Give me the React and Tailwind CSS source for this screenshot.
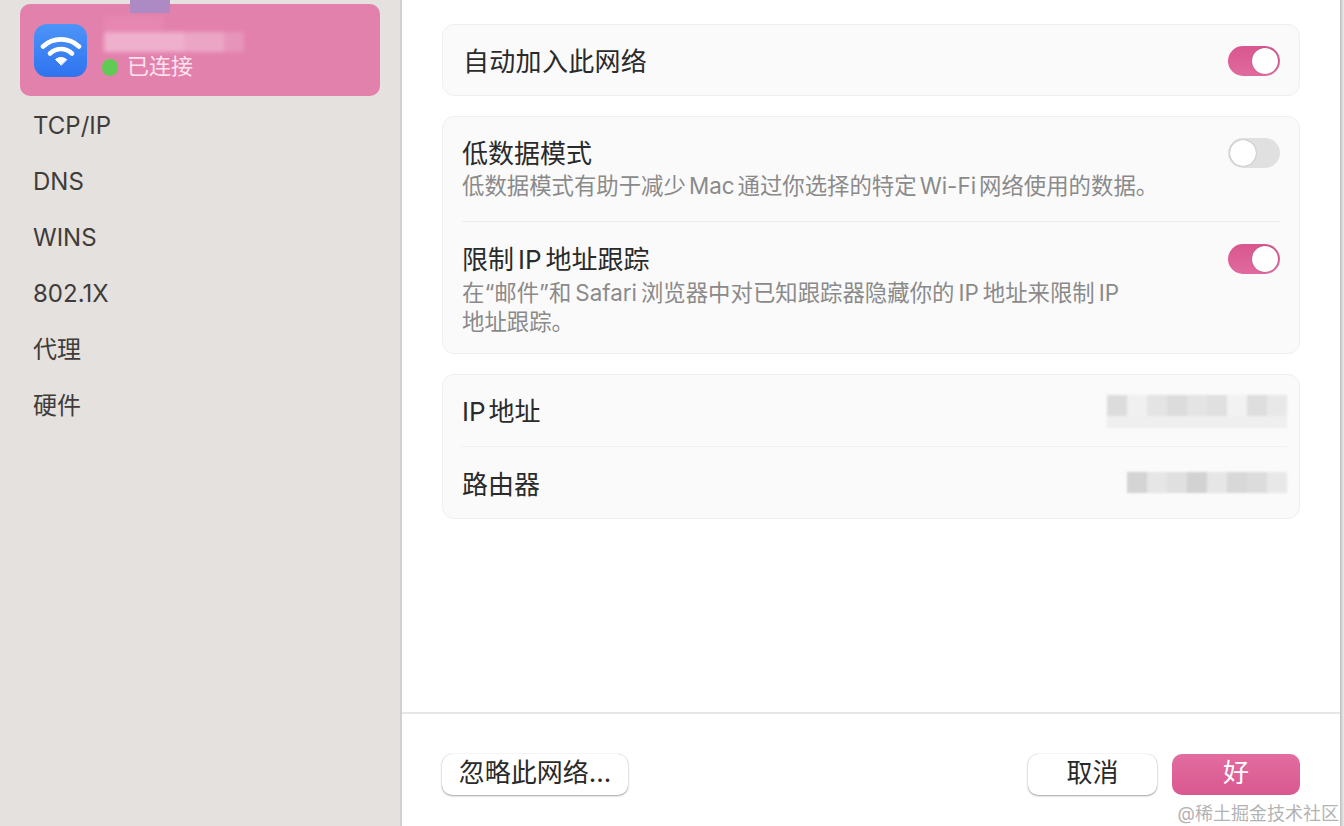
import React from "react";

const cjk = "font-['Inter','Noto_Sans_CJK_SC',sans-serif]";

function Toggle({ on }) {
  return (
    <div
      className={`flex h-[30px] w-[52px] shrink-0 items-center rounded-full p-[2px] ${
        on ? "justify-end bg-gradient-to-b from-[#d9568f] to-[#e06a9e]" : "justify-start bg-[#e0e0e0]"
      }`}
    >
      <div className="h-[26px] w-[26px] rounded-full bg-white shadow-[0_0_1px_rgba(0,0,0,0.5)]" />
    </div>
  );
}

// mosaic blocks for the blurred out values
function Redacted({ cells, under }) {
  return (
    <div className="flex flex-col blur-[0.8px]">
      <div className="flex h-[21px]">
        {cells.map((c, i) => (
          <div key={i} className="h-full w-5" style={{ backgroundColor: c }} />
        ))}
      </div>
      {under && (
        <div className="flex h-3">
          {cells.map((c, i) => (
            <div key={i} className="h-full w-5 bg-[#efefef]" />
          ))}
        </div>
      )}
    </div>
  );
}

function WifiIcon() {
  return (
    <div className="flex h-[53px] w-[53px] items-center justify-center rounded-[13px] bg-gradient-to-b from-[#4c94f8] to-[#2f73ef]">
      <svg width="42" height="34" viewBox="0 0 42 34" fill="none" stroke="white" strokeLinecap="round">
        <path d="M3 12.5C13 3 29 3 39 12.5" strokeWidth="4.6" />
        <path d="M10 19.5C16.5 13.5 25.5 13.5 32 19.5" strokeWidth="4.6" />
        <path d="M21 31l-5.5-5.5c3-2.6 8-2.6 11 0z" fill="white" stroke="white" strokeWidth="1" strokeLinejoin="round" />
      </svg>
    </div>
  );
}

const sideItems = ["TCP/IP", "DNS", "WINS", "802.1X", "代理", "硬件"];

export default function App() {
  return (
    <div className={`relative flex h-[826px] w-[1344px] overflow-hidden bg-white ${cjk}`}>
      {/* sidebar */}
      <aside className="h-full w-[402px] shrink-0 border-r-2 border-[#d2d0ce] bg-[#e5e1df] px-5 pt-1">
        <div className="flex h-[92px] items-start gap-[17px] rounded-[10px] bg-[#e381ad] pl-[14px] pt-5">
          <WifiIcon />
          <div className="-mt-2 flex flex-col">
            <div className="h-[16px] w-[60px] bg-[#e587b1] blur-[2px]" />
            <div className="flex h-5 w-[140px] blur-[2px]">
              <div className="h-full w-20 bg-[#efb0cd]" />
              <div className="h-full w-[40px] bg-[#eba6c6]" />
              <div className="h-full w-5 bg-[#e694ba]" />
            </div>
            <div className="mt-[2px] flex h-[24px] items-center gap-[9px] text-[22px] leading-none text-[#fbe3ee]">
              <span className="-ml-[2px] mt-[2px] h-[17px] w-[16px] rounded-full bg-[#5fcb54]" />
              已连接
            </div>
          </div>
        </div>
        <ul className="mt-[2px] pl-[13px] text-[24px] text-[#3f3c3a]">
          {sideItems.map((item) => (
            <li key={item} className="flex h-14 items-center">
              {item}
            </li>
          ))}
        </ul>
      </aside>

      {/* content */}
      <main className="flex h-full flex-1 flex-col pr-1">
        <div className="flex flex-1 flex-col gap-5 pl-10 pr-10 pt-6">
          <section className="flex h-[72px] items-center justify-between rounded-xl border border-[#efefef] bg-[#fafafa] pl-5 pr-[19px] pt-[2px]">
            <span className="text-[26px] tracking-[0.3px] text-[#2a2a2a]">自动加入此网络</span>
            <Toggle on />
          </section>

          <section className="h-[238px] rounded-xl border border-[#efefef] bg-[#fafafa] pl-[19px] pr-[19px]">
            <div className="flex h-[105px] justify-between border-b border-[#ececec] pt-[21px]">
              <div>
                <div className="pt-[1px] text-[26px] leading-[30px] text-[#2a2a2a]">低数据模式</div>
                <div className="mt-[2px] text-[22.4px] leading-[29px] text-[#8a8a8a]">
                  低数据模式有助于减少<span className="mx-[3px]">Mac</span>通过你选择的特定<span className="mx-[3px]">Wi-Fi</span>网络使用的数据。
                </div>
              </div>
              <Toggle />
            </div>
            <div className="flex justify-between pt-[22px]">
              <div>
                <div className="pt-[1px] text-[26px] leading-[30px] text-[#2a2a2a]">
                  限制<span className="mx-1">IP</span>地址跟踪
                </div>
                <div className="mt-[3px] w-[670px] text-[22.4px] leading-[29px] text-[#8a8a8a]">
                  在“邮件”和<span className="mx-1">Safari</span>浏览器中对已知跟踪器隐藏你的<span className="mx-1">IP</span>地址来限制<span className="ml-1">IP</span> 地址跟踪。
                </div>
              </div>
              <Toggle on />
            </div>
          </section>

          <section className="h-[145px] rounded-xl border border-[#efefef] bg-[#fafafa] pl-[19px] pr-3">
            <div className="flex h-[72px] items-center justify-between border-b border-[#f0f0f0]">
              <span className="pt-[2px] text-[26px] text-[#2a2a2a]">
                IP<span className="ml-[3px]">地址</span>
              </span>
              <div className="pt-[2px]">
                <Redacted under cells={["#dcdcdc", "#f0f0f0", "#e4e4e4", "#dcdcdc", "#e4e4e4", "#e0e0e0", "#f2f2f2", "#dedede", "#e8e8e8"]} />
              </div>
            </div>
            <div className="flex h-[71px] items-center justify-between">
              <span className="pt-[3px] text-[26px] text-[#2a2a2a]">路由器</span>
              <Redacted cells={["#d4d4d4", "#e6e6e6", "#e0e0e0", "#d2d2d2", "#e6e6e6", "#d8d8d8", "#dcdcdc", "#e8e8e8"]} />
            </div>
          </section>
        </div>

        {/* footer */}
        <footer className="flex h-[114px] items-start justify-between border-t-2 border-[#e6e6e6] pl-10 pr-10 pt-10">
          <button className="h-[41px] w-[186px] rounded-[10px] bg-white pb-1 text-[26px] leading-none text-[#2a2a2a] shadow-[0_1px_2px_rgba(0,0,0,0.35),0_0_1px_rgba(0,0,0,0.25)]">
            忽略此网络...
          </button>
          <div className="flex gap-[15px]">
            <button className="h-[41px] w-[129px] rounded-[10px] bg-white pb-1 text-[26px] leading-none text-[#2a2a2a] shadow-[0_1px_2px_rgba(0,0,0,0.35),0_0_1px_rgba(0,0,0,0.25)]">
              取消
            </button>
            <button className="h-[41px] w-[128px] rounded-[10px] bg-gradient-to-b from-[#e26c9f] to-[#d9588f] pb-1 text-[26px] leading-none text-white">
              好
            </button>
          </div>
        </footer>
      </main>

      {/* stray overlays on top of the screenshot */}
      <div className="absolute left-[130px] top-0 h-[13px] w-10 bg-[#ae8ac5]" />
      <div className="absolute bottom-0 right-0 top-0 w-1 bg-gradient-to-r from-[#bdbdbd] to-[#ececec]" />
      <span className="absolute bottom-[3px] right-[5px] text-[18px] leading-none text-[#b3b3b3]">@稀土掘金技术社区</span>
    </div>
  );
}
